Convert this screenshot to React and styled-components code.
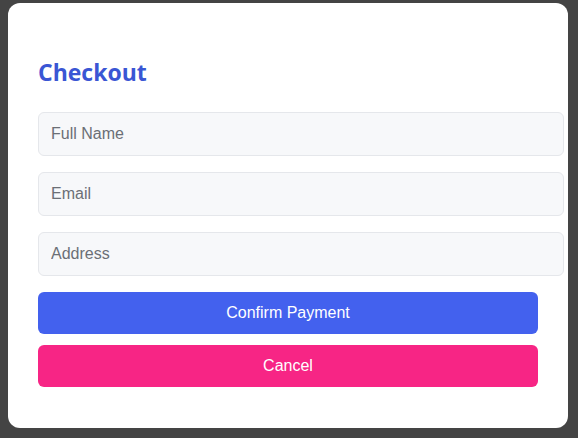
import React from "react";
import styled, { createGlobalStyle } from "styled-components";

const GlobalStyle = createGlobalStyle`
  html, body {
    margin: 0;
    background: #444444;
  }
  body {
    padding: 3px 10px 11px 8px;
    font-family: "Liberation Sans", Arial, sans-serif;
  }
`;

const Card = styled.div`
  width: 560px;
  box-sizing: border-box;
  padding: 30px 30px 41px;
  background: #ffffff;
  border-radius: 12px;
`;

const Title = styled.h2`
  margin: 24px 0 24px;
  font-family: "Open Sans", "Noto Sans", sans-serif;
  font-size: 23px;
  line-height: 31px;
  font-weight: 700;
  color: #3a56d4;
`;

const Form = styled.form`
  display: flex;
  flex-direction: column;
`;

const Input = styled.input`
  width: 100%;
  box-sizing: content-box;
  margin: 0 0 16px;
  padding: 12px;
  font-family: "Liberation Sans", Arial, sans-serif;
  font-size: 16px;
  line-height: 18px;
  height: 18px;
  color: #333;
  background: #f7f8fa;
  border: 1px solid #e5e7eb;
  border-radius: 6px;
  outline: none;

  &::placeholder {
    color: #6b6f76;
  }
`;

const Button = styled.button`
  width: 100%;
  height: 42px;
  margin-top: ${({ $first }) => ($first ? "0" : "11px")};
  padding: 0;
  font-family: "Liberation Sans", Arial, sans-serif;
  font-size: 16px;
  color: #ffffff;
  background: ${({ $variant }) => ($variant === "cancel" ? "#f72585" : "#4361ee")};
  border: none;
  border-radius: 6px;
  cursor: pointer;
`;

const App = () => {
  return (
    <>
      <GlobalStyle />
      <Card>
        <Title>Checkout</Title>
        <Form onSubmit={(e) => e.preventDefault()}>
          <Input type="text" placeholder="Full Name" />
          <Input type="email" placeholder="Email" />
          <Input type="text" placeholder="Address" />
          <Button type="submit" $first>Confirm Payment</Button>
          <Button type="button" $variant="cancel">Cancel</Button>
        </Form>
      </Card>
    </>
  );
};

export default App;
